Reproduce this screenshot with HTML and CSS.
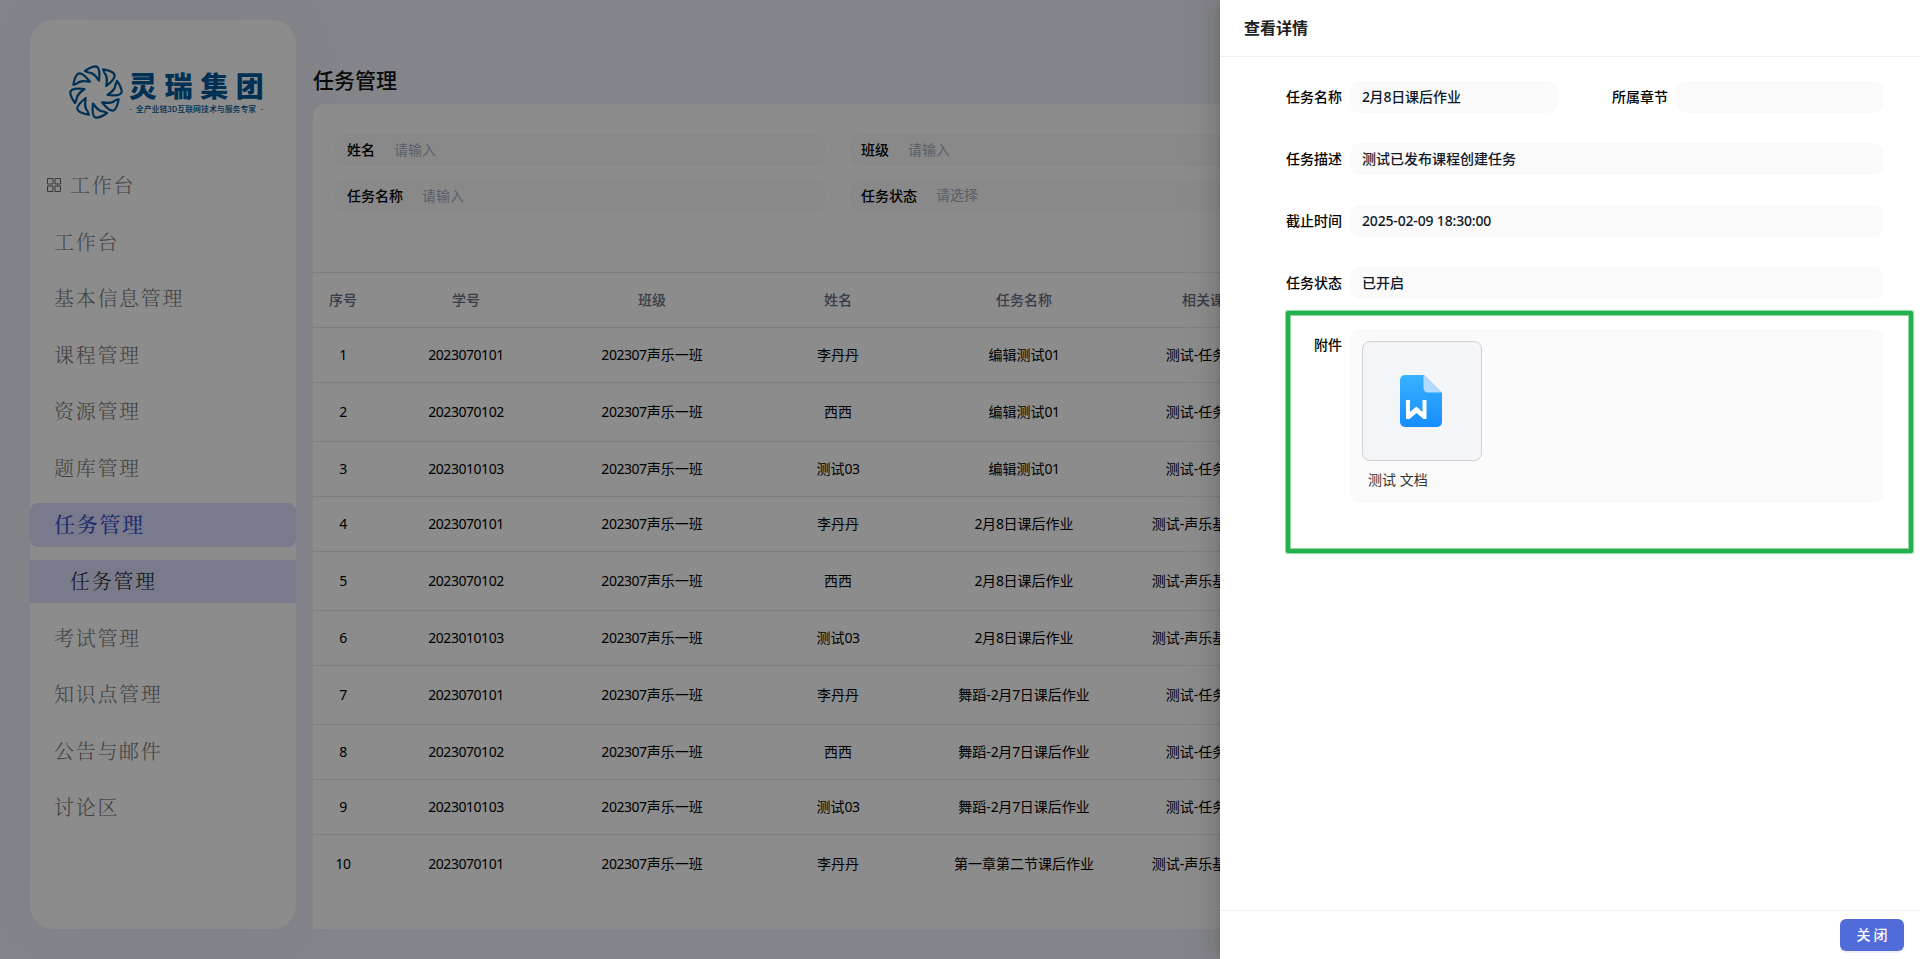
FILE: index.html
```html
<!DOCTYPE html>
<html lang="zh-CN">
<head>
<meta charset="utf-8">
<title>任务管理</title>
<link rel="stylesheet" href="styles.css">
</head>
<body>
<div class="app">
  <aside class="sidebar">
    <div class="brand">
      <svg class="brand-mark" viewBox="0 0 54 54">
        <defs><path id="petal" d="M16 6C20 3 23 1.300 27 1.300 30.500 2 31 7 30 15.500 27 11.500 24.500 7.500 19.500 7.500z"/></defs>
        <g fill="none" stroke="#005a9c" stroke-width="2.200" stroke-linejoin="round">
          <use href="#petal"/><use href="#petal" transform="rotate(45 27 27)"/><use href="#petal" transform="rotate(90 27 27)"/><use href="#petal" transform="rotate(135 27 27)"/><use href="#petal" transform="rotate(180 27 27)"/><use href="#petal" transform="rotate(225 27 27)"/><use href="#petal" transform="rotate(270 27 27)"/><use href="#petal" transform="rotate(315 27 27)"/>
        </g>
      </svg>
      <div class="brand-text">
        <div class="brand-name">灵瑞集团</div>
        <div class="brand-sub"><span>-</span><span>全产业链3D互联网技术与服务专家</span><span>-</span></div>
      </div>
    </div>
    <nav class="menu">
      <div class="item head"><svg class="grid-icon" viewBox="0 0 14 14"><path d="M.5.500h5.500v5.500h-5.500zM8 .5h5.500v5.500h-5.500zM.5 8h5.500v5.500h-5.500zM8 8h5.500v5.500h-5.500z"/></svg>工作台</div>
      <div class="item">工作台</div>
      <div class="item">基本信息管理</div>
      <div class="item">课程管理</div>
      <div class="item">资源管理</div>
      <div class="item">题库管理</div>
      <div class="item active">任务管理</div>
      <div class="item sub">任务管理</div>
      <div class="item">考试管理</div>
      <div class="item">知识点管理</div>
      <div class="item">公告与邮件</div>
      <div class="item">讨论区</div>
    </nav>
  </aside>
  <main class="main">
    <h1 class="title">任务管理</h1>
    <section class="panel">
      <div class="filters">
        <div class="filter"><b>姓名</b><span>请输入</span></div>
        <div class="filter"><b>班级</b><span>请输入</span></div>
        <div class="filter"><b>任务名称</b><span>请输入</span></div>
        <div class="filter"><b>任务状态</b><span class="select">请选择</span></div>
      </div>
      <div class="table">
        <div class="row thead"><div>序号</div><div>学号</div><div>班级</div><div>姓名</div><div>任务名称</div><div>相关课程</div></div>
        <div class="row"><div><i>1</i></div><div><i>2023070101</i></div><div><i>202307</i>声乐一班</div><div>李丹丹</div><div>编辑测试<i>01</i></div><div>测试-任务创建</div></div>
        <div class="row tall"><div><i>2</i></div><div><i>2023070102</i></div><div><i>202307</i>声乐一班</div><div>西西</div><div>编辑测试<i>01</i></div><div>测试-任务创建</div></div>
        <div class="row"><div><i>3</i></div><div><i>2023010103</i></div><div><i>202307</i>声乐一班</div><div>测试<i>03</i></div><div>编辑测试<i>01</i></div><div>测试-任务创建</div></div>
        <div class="row"><div><i>4</i></div><div><i>2023070101</i></div><div><i>202307</i>声乐一班</div><div>李丹丹</div><div><i>2</i>月<i>8</i>日课后作业</div><div>测试-声乐基础课程</div></div>
        <div class="row tall"><div><i>5</i></div><div><i>2023070102</i></div><div><i>202307</i>声乐一班</div><div>西西</div><div><i>2</i>月<i>8</i>日课后作业</div><div>测试-声乐基础课程</div></div>
        <div class="row"><div><i>6</i></div><div><i>2023010103</i></div><div><i>202307</i>声乐一班</div><div>测试<i>03</i></div><div><i>2</i>月<i>8</i>日课后作业</div><div>测试-声乐基础课程</div></div>
        <div class="row tall"><div><i>7</i></div><div><i>2023070101</i></div><div><i>202307</i>声乐一班</div><div>李丹丹</div><div>舞蹈-<i>2</i>月<i>7</i>日课后作业</div><div>测试-任务创建</div></div>
        <div class="row"><div><i>8</i></div><div><i>2023070102</i></div><div><i>202307</i>声乐一班</div><div>西西</div><div>舞蹈-<i>2</i>月<i>7</i>日课后作业</div><div>测试-任务创建</div></div>
        <div class="row"><div><i>9</i></div><div><i>2023010103</i></div><div><i>202307</i>声乐一班</div><div>测试<i>03</i></div><div>舞蹈-<i>2</i>月<i>7</i>日课后作业</div><div>测试-任务创建</div></div>
        <div class="row tall last"><div><i>10</i></div><div><i>2023070101</i></div><div><i>202307</i>声乐一班</div><div>李丹丹</div><div>第一章第二节课后作业</div><div>测试-声乐基础课程</div></div>
      </div>
    </section>
  </main>
</div>
<div class="mask"></div>
<div class="drawer">
  <header class="drawer-head">查看详情</header>
  <div class="drawer-body">
    <div class="pair">
      <div class="field"><label>任务名称</label><div class="value"><i>2</i>月<i>8</i>日课后作业</div></div>
      <div class="field"><label>所属章节</label><div class="value"></div></div>
    </div>
    <div class="field"><label>任务描述</label><div class="value">测试已发布课程创建任务</div></div>
    <div class="field"><label>截止时间</label><div class="value"><i class="date">2025-02-09 18:30:00</i></div></div>
    <div class="field"><label>任务状态</label><div class="value">已开启</div></div>
    <div class="field"><label>附件</label>
      <div class="value files">
        <div class="thumb">
          <svg class="doc-icon" viewBox="0 0 42 52">
            <defs><linearGradient id="doc" x1="0" y1="0" x2="0" y2="1"><stop offset="0" stop-color="#36b2ff"/><stop offset="1" stop-color="#168dff"/></linearGradient></defs>
            <path fill="url(#doc)" d="M5 0H24L42 18V47a5 5 0 0 1-5 5H5a5 5 0 0 1-5-5V5a5 5 0 0 1 5-5z"/>
            <path fill="#b4d9ff" d="M23.500 0 42 17.500H28a4.500 4.500 0 0 1-4.500-4.500z"/>
            <path fill="#fff" d="M6 25H10V37L16.500 31.500 22.500 37V25H26.500V44H23.500L16.500 38 9.500 44H6z"/>
          </svg>
        </div>
        <div class="file-name">测试 文档</div>
      </div>
    </div>
  </div>
  <footer class="drawer-foot"><button class="close">关 闭</button></footer>
</div>
<div class="highlight"></div>
</body>
</html>
```
FILE: styles.css
```css
* { box-sizing: border-box; }
body { margin: 0; width: 1920px; height: 959px; overflow: hidden; font: 14px/22px "Noto Sans", "Noto Sans CJK SC", sans-serif; color: #000; }
i { font-style: normal; letter-spacing: -0.46px; }
.date { letter-spacing: -0.17px; }

.app { display: flex; gap: 17px; height: 959px; padding: 20px 0 30px 30px; background: #f0f2fb; }
.sidebar { width: 266px; flex: none; background: #fff; border-radius: 24px; box-shadow: 0 0 60px rgba(110, 100, 190, .06); }
.brand { display: flex; gap: 6px; height: 144px; padding: 45px 0 0 39px; }
.brand-mark { width: 54px; height: 54px; }
.brand-text { width: 134px; padding-top: 5px; color: #005a9c; }
.brand-name { font: 900 28px/31px "Noto Sans CJK SC", sans-serif; letter-spacing: 7.600px; white-space: nowrap; }
.brand-sub { display: flex; justify-content: space-between; padding-top: 3px; font: 500 7.900px/9px "Noto Sans CJK SC", sans-serif; white-space: nowrap; }
.menu { display: flex; flex-direction: column; gap: 13.400px; }
.item { height: 43.200px; padding-left: 24px; font: 300 20px/41px "Noto Serif CJK SC", "Noto Sans CJK SC Light", "Noto Sans CJK SC", serif; letter-spacing: 1.700px; color: #777; }
.head { display: flex; align-items: center; gap: 9px; padding: 0 0 2px 17px; }
.grid-icon { width: 14px; height: 14px; fill: none; stroke: #666; }
.active { background: #dddeff; border-radius: 8px; color: #3c55d0; font-weight: 500; font-size: 21px; }
.sub { background: #dddeff; color: #222; padding-left: 40px; }

.main { flex: 1; display: flex; flex-direction: column; }
.title { margin: 0; height: 84px; padding-top: 44px; font-size: 21px; line-height: 30px; font-weight: 500; font-family: "Noto Sans CJK SC", sans-serif; color: #111; }
.panel { flex: 1; background: #fff; border-radius: 12px 12px 0 0; }
.filters { display: grid; grid-template-columns: 490px 490px; gap: 14px 24px; height: 168px; padding: 30px 0 0 22px; align-content: start; }
.filter { display: flex; gap: 19px; height: 32px; padding-left: 12px; line-height: 31px; background: #fafafa; border-radius: 10px; }
.filter b { font-weight: 500; }
.filter span { color: #a0adbf; }
.filter .select { line-height: 30px; }
.row { display: grid; grid-template-columns: 60px repeat(5, 186px); height: 55px; line-height: 54px; text-align: center; border-top: 1px solid #e6e8ec; }
.thead { color: #667085; font-weight: 500; }
.tall { height: 59px; line-height: 58px; }

.mask { position: absolute; inset: 0; background: rgba(0, 0, 0, .45); }
.drawer { position: absolute; top: 0; right: 0; width: 700px; height: 959px; display: flex; flex-direction: column; background: #fff; box-shadow: -6px 0 16px rgba(0, 0, 0, .08), -3px 0 6px -4px rgba(0, 0, 0, .12), -9px 0 28px 8px rgba(0, 0, 0, .05); }
.drawer-head { height: 57px; padding-left: 24px; font-size: 16px; line-height: 56px; font-weight: 600; border-bottom: 1px solid #f0f0f0; color: #1f1f1f; }
.drawer-body { flex: 1; display: flex; flex-direction: column; gap: 30px; padding: 24px 36px 0 66px; font-weight: 500; }
.pair { display: grid; grid-template-columns: 272px 272px; gap: 54px; }
.field { display: flex; gap: 8px; line-height: 31px; }
.field label { width: 56px; text-align: right; flex: none; }
.value { flex: 1; min-height: 32px; padding-left: 12px; background: #fafafa; border-radius: 10px; color: #101828; }
.files { height: 174px; padding-top: 12px; }
.thumb { display: grid; justify-content: start; align-content: center; padding-left: 37px; width: 120px; height: 120px; border: 1px solid #d0d2d5; border-radius: 8px; background: #f3f5f8; }
.doc-icon { width: 42px; height: 52px; }
.file-name { padding: 3px 0 0 6px; color: #333; font-weight: 400; }
.drawer-foot { height: 49px; padding: 8px 16px; border-top: 1px solid #f0f0f0; text-align: right; }
.close { display: block; margin-left: auto; width: 64px; height: 32px; padding: 0 0 2px; border: 0; border-radius: 6px; background: #516bd9; color: #fff; font: 500 14px/30px "Noto Sans CJK SC", sans-serif; box-shadow: 0 2px 0 rgba(5, 5, 255, .06); }
.highlight { position: absolute; left: 1286px; top: 311px; width: 627px; height: 242px; border: 4px solid #22b14c; border-radius: 2px; box-shadow: 0 0 0 1px rgba(34, 177, 76, .5), inset 0 0 0 1px rgba(34, 177, 76, .5); }
```
